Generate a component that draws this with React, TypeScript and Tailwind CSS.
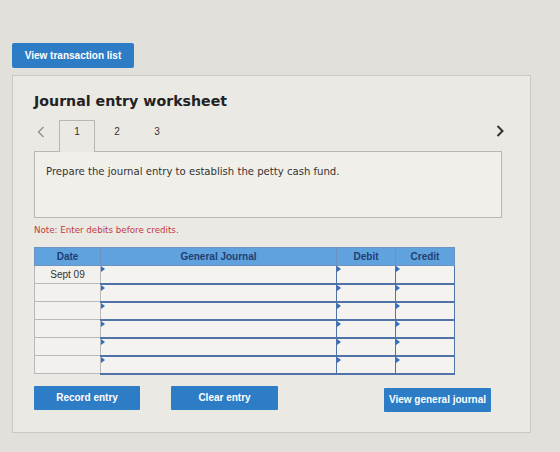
import { useState } from "react"

const rows = ["Sept 09", "", "", "", "", ""]

function EntryCell({ className = "" }: { className?: string }) {
  return (
    <td className={`relative border border-[#4f72a8] border-b-2 bg-[#f4f3ef] p-0 ${className}`}>
      <span className="absolute left-0 top-0 h-0 w-0 border-t-[3px] border-b-[3px] border-l-[4px] border-t-transparent border-b-transparent border-l-[#2f6fc0]" />
      <div className="h-[16px]" />
    </td>
  )
}

function Chevron({ dir, className }: { dir: "left" | "right"; className: string }) {
  return (
    <svg width="8" height="12" viewBox="0 0 8 12" className={className}>
      <path d={dir === "left" ? "M6.5 1 L1.5 6 L6.5 11" : "M1.5 1 L6.5 6 L1.5 11"} fill="none" stroke="currentColor" />
    </svg>
  )
}

export default function App() {
  const [tab, setTab] = useState(1)

  return (
    <div className="h-[452px] w-[560px] overflow-hidden bg-[#e2e0db] pt-[42px] pl-[12px] font-['Liberation_Sans',Arial,sans-serif]">
      <button className="h-[25px] w-[122px] rounded-[2px] bg-[#2c7cc6] text-[10px] font-bold text-white">
        View transaction list
      </button>

      <div className="mt-[7px] h-[358px] w-[519px] border border-[#cac8c3] bg-[#ebe9e4] px-[21px] pt-[16px]">
        <h1 className="font-['DejaVu_Sans',Verdana,sans-serif] text-[14.2px] font-bold leading-[18px] text-[#222]">
          Journal entry worksheet
        </h1>

        {/* step tabs */}
        <div className="mt-[10px] flex h-[32px] items-start">
          <div className="flex w-[25px] pl-[3px] pt-[6px]">
            <Chevron dir="left" className="stroke-[1.3] text-[#8c8c8c]" />
          </div>
          {[1, 2, 3].map((n) => (
            <button
              key={n}
              onClick={() => setTab(n)}
              className={`relative z-10 h-[32px] w-[36px] text-[10px] text-[#333] ${
                n === tab ? "border border-b-0 border-[#b9b7b2] bg-[#ebe9e4]" : "border border-transparent"
              } ${n === 1 ? "" : "ml-[4px]"}`}
            >
              <span className="relative -top-[5px]">{n}</span>
            </button>
          ))}
          <div className="ml-auto mr-[5px] flex pt-[5px]">
            <Chevron dir="right" className="stroke-[2] text-[#333]" />
          </div>
        </div>

        <div className="-mt-px h-[67px] w-[468px] border border-[#b9b7b2] bg-[#f1efea] px-[11px] pt-[12px]">
          <p className="font-['DejaVu_Sans',Verdana,sans-serif] text-[10.1px] text-[#333]">
            Prepare the journal entry to establish the petty cash fund.
          </p>
        </div>

        <p className="mt-[6px] font-['DejaVu_Sans',Verdana,sans-serif] text-[8.7px] text-[#c2393f]">
          Note: Enter debits before credits.
        </p>

        <table className="mt-[10px] w-[421px] border-collapse text-[10px]">
          <thead>
            <tr className="h-[18px] bg-[#5fa2de] font-bold text-[#1f3f73]">
              <th className="w-[66px] border border-[#6d93c0] font-bold">Date</th>
              <th className="w-[236px] border border-[#6d93c0] font-bold">General Journal</th>
              <th className="w-[59px] border border-[#6d93c0] font-bold">Debit</th>
              <th className="w-[59px] border border-[#6d93c0] font-bold">Credit</th>
            </tr>
          </thead>
          <tbody>
            {rows.map((d, i) => (
              <tr key={i} className="h-[18px]">
                <td className="border border-[#b8b8b8] bg-[#f2f1ed] text-center text-[10px] text-[#333]">{d}</td>
                <EntryCell />
                <EntryCell />
                <EntryCell />
              </tr>
            ))}
          </tbody>
        </table>

        <div className="mt-[11px] flex items-start">
          <button className="h-[24px] w-[106px] rounded-[1px] bg-[#2c7cc6] text-[10px] font-bold text-white">
            Record entry
          </button>
          <button className="ml-[31px] h-[24px] w-[107px] rounded-[1px] bg-[#2c7cc6] text-[10px] font-bold text-white">
            Clear entry
          </button>
          <button className="ml-[106px] mt-[2px] h-[24px] w-[107px] rounded-[1px] bg-[#2c7cc6] text-[10px] font-bold text-white">
            View general journal
          </button>
        </div>
      </div>
    </div>
  )
}
